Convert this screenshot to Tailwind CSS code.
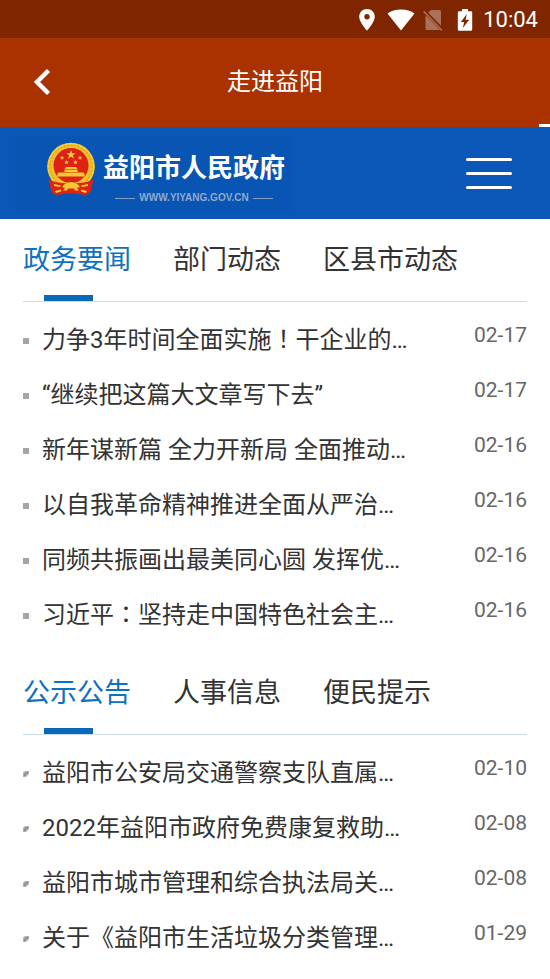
<!DOCTYPE html>
<html lang="zh-CN">
<head>
  <meta charset="UTF-8" />
  <meta name="viewport" content="width=device-width, initial-scale=1" />
  <title>走进益阳</title>
  <script src="https://cdn.jsdelivr.net/npm/@tailwindcss/browser@4"></script>
</head>
<body class="bg-white min-h-screen text-[#333] font-[Roboto,'Noto_Sans_CJK_SC',sans-serif]">

  <!-- status bar -->
  <div class="flex h-[38px] items-center justify-end bg-[#7f2600] pt-[2px] pr-3 text-white">
    <svg class="mr-3 h-[22px] w-4" viewBox="0 0 16 22" fill="currentColor" aria-hidden="true">
      <path fill-rule="evenodd" d="M8 0C3.6 0 .2 3.4.2 7.700c0 5.500 7.800 14 7.800 14s7.800-8.500 7.800-14C15.800 3.400 12.400 0 8 0Zm0 5a2.700 2.700 0 1 1 0 5.400A2.700 2.700 0 0 1 8 5Z" />
    </svg>
    <svg class="mr-2 h-[22px] w-7" viewBox="0 0 28 22" fill="currentColor" aria-hidden="true">
      <path d="M14 21.500.5 4.500C4 1.800 8.500.4 14 .4s10 1.400 13.500 4.100Z" />
    </svg>
    <svg class="mr-[14px] h-[22px] w-5 text-[#aa705a]" viewBox="0 0 20 22" aria-hidden="true">
      <path fill="currentColor" d="M8 1h8.500Q18 1 18 2.500v14.300L5.200 3.800ZM2.500 6 17 21H4q-1.500 0-1.500-1.500Z" />
      <path d="M.6 2.200 19 21.400" stroke="currentColor" stroke-width="1.500" />
    </svg>
    <svg class="mr-[10px] h-[22px] w-4" viewBox="0 0 16 22" fill="currentColor" aria-hidden="true">
      <path fill-rule="evenodd" d="M5 0h6v2.200h3q1.200 0 1.200 1.200v17.200q0 1.200-1.200 1.200H2Q.8 21.800.8 20.600V3.400Q.8 2.200 2 2.200h3ZM9.800 5 3.800 13h3.400l-1.400 6 6.400-8.200H8.600Z" />
    </svg>
    <span class="text-[22px] leading-6">10:04</span>
  </div>

  <!-- title bar -->
  <header class="relative grid h-[89px] grid-cols-[84px_1fr_84px] items-center bg-[#a93200] pb-[2px] text-white">
    <button type="button" aria-label="返回" class="flex h-full items-center justify-center">
      <svg class="h-7 w-5" viewBox="0 0 20 28" fill="none" stroke="currentColor" stroke-width="4.500" aria-hidden="true">
        <path d="M16.500 2.500 5 14l11.500 11.500" />
      </svg>
    </button>
    <h1 class="text-center text-2xl">走进益阳</h1>
    <span class="absolute right-0 bottom-0 h-[3px] w-[11px] bg-white"></span>
  </header>

  <!-- site banner -->
  <div class="flex h-[92px] items-center justify-between bg-[#0a57b8] pr-[38px] pl-[15px] text-white">
    <a href="#" class="flex h-[74px] items-start bg-[#0955b4] pt-[6px] pr-2 pl-[31px]">
      <svg class="mr-[7px] h-[54px] w-[50px]" viewBox="0 0 50 54" aria-hidden="true">
        <circle cx="25" cy="24.500" r="23.800" fill="#f2c02c" />
        <circle cx="25" cy="24.500" r="21" fill="none" stroke="#dca325" stroke-width="1.200" stroke-dasharray="2 1.500" />
        <circle cx="25" cy="24.500" r="22.800" fill="none" stroke="#fadb5a" stroke-width="1" stroke-dasharray="3 2" />
        <circle cx="25" cy="23.500" r="17.500" fill="#de2314" />
        <path fill="#fbd63c" d="m25 8 1.100 3.300h3.500l-2.800 2 1.100 3.400-2.900-2.100-2.900 2.100 1.100-3.400-2.800-2h3.500ZM16 13.500l.6 1.500h1.700l-1.300 1 .5 1.700-1.500-1-1.500 1 .5-1.700-1.300-1h1.700ZM34 13.500l.6 1.500h1.700l-1.300 1 .5 1.700-1.500-1-1.500 1 .5-1.700-1.300-1h1.700ZM20.500 18l.6 1.500h1.700l-1.300 1 .5 1.700-1.500-1-1.500 1 .5-1.700-1.300-1h1.700ZM29.500 18l.6 1.500h1.700l-1.300 1 .5 1.700-1.500-1-1.500 1 .5-1.700-1.300-1h1.700Z" />
        <path fill="#f6c832" d="M20 25h10l1.500 2h-13ZM18.500 27.500h13v2.500h-13ZM12 30.500h26l1 4H11Z" />
        <path fill="#de2314" d="M2.500 37.500q4 2 9.500 3l9 1h8l9-1q5.500-1 9.500-3L44.500 50q-3 4-8.500 2.500l-7-1h-8l-7 1Q8.500 54 5.500 50Z" />
        <path fill="#f6c832" d="M18 42.500q7-5 14 0l2 2.500-3 1 2 2.500h-4l-1-2h-6l-1 2h-4l2-2.500-3-1ZM8 42l7 1.500-1 1.500-6-1ZM42 42l-7 1.500 1 1.500 6-1ZM9 49l6-1.500v2l-5 1.500ZM41 49l-6-1.500v2l5 1.500Z" />
      </svg>
      <span class="flex flex-col items-center pt-[6px]">
        <span class="text-[26px] leading-10 font-bold">益阳市人民政府</span>
        <span class="flex items-center gap-1 font-['Liberation_Sans',sans-serif] text-[10px] leading-5 font-bold text-[#91a9cb]">
          <i class="h-px w-5 bg-[#7f9fc9]"></i>WWW.YIYANG.GOV.CN<i class="h-px w-5 bg-[#7f9fc9]"></i>
        </span>
      </span>
    </a>
    <button type="button" aria-label="菜单" class="flex w-[46px] flex-col gap-[11px]">
      <span class="h-[3px] w-full rounded-full bg-white"></span>
      <span class="h-[3px] w-full rounded-full bg-white"></span>
      <span class="h-[3px] w-full rounded-full bg-white"></span>
    </button>
  </div>

  <main class="px-[23px]">
    <section class="pb-[9px]">
      <div class="flex h-[83px] gap-[42px] border-b border-[#c9dded] text-[27px] leading-[80px]">
        <button type="button" class="relative text-[#0e71be]">政务要闻<span class="absolute bottom-0 left-[21px] h-[6px] w-[49px] bg-[#0b69b9]"></span></button>
        <button type="button">部门动态</button>
        <button type="button">区县市动态</button>
      </div>
      <ul class="pt-[11px] text-2xl leading-[55px]">
        <li class="flex h-[55px] items-center">
          <span class="mr-[13px] size-[6px] shrink-0 bg-[#a5a5a5]"></span>
          <a href="#" class="min-w-0 flex-1 truncate">力争3年时间全面实施<span lang="zh-TW" class="font-['Noto_Sans_CJK_TC',sans-serif] leading-none">！</span>干企业的…</a>
          <time class="self-start text-[21px] leading-[45px] text-[#666]">02-17</time>
        </li>
        <li class="flex h-[55px] items-center">
          <span class="mr-[13px] size-[6px] shrink-0 bg-[#a5a5a5]"></span>
          <a href="#" class="min-w-0 flex-1 truncate">“继续把这篇大文章写下去”</a>
          <time class="self-start text-[21px] leading-[45px] text-[#666]">02-17</time>
        </li>
        <li class="flex h-[55px] items-center">
          <span class="mr-[13px] size-[6px] shrink-0 bg-[#a5a5a5]"></span>
          <a href="#" class="min-w-0 flex-1 truncate">新年谋新篇 全力开新局 全面推动…</a>
          <time class="self-start text-[21px] leading-[45px] text-[#666]">02-16</time>
        </li>
        <li class="flex h-[55px] items-center">
          <span class="mr-[13px] size-[6px] shrink-0 bg-[#a5a5a5]"></span>
          <a href="#" class="min-w-0 flex-1 truncate">以自我革命精神推进全面从严治…</a>
          <time class="self-start text-[21px] leading-[45px] text-[#666]">02-16</time>
        </li>
        <li class="flex h-[55px] items-center">
          <span class="mr-[13px] size-[6px] shrink-0 bg-[#a5a5a5]"></span>
          <a href="#" class="min-w-0 flex-1 truncate">同频共振画出最美同心圆 发挥优…</a>
          <time class="self-start text-[21px] leading-[45px] text-[#666]">02-16</time>
        </li>
        <li class="flex h-[55px] items-center">
          <span class="mr-[13px] size-[6px] shrink-0 bg-[#a5a5a5]"></span>
          <a href="#" class="min-w-0 flex-1 truncate">习近平<span lang="zh-TW" class="font-['Noto_Sans_CJK_TC',sans-serif] leading-none">：</span>坚持走中国特色社会主…</a>
          <time class="self-start text-[21px] leading-[45px] text-[#666]">02-16</time>
        </li>
      </ul>
    </section>

    <section>
      <div class="flex h-[83px] gap-[42px] border-b border-[#c9dded] text-[27px] leading-[80px]">
        <button type="button" class="relative text-[#0e71be]">公示公告<span class="absolute bottom-0 left-[21px] h-[6px] w-[49px] bg-[#0b69b9]"></span></button>
        <button type="button">人事信息</button>
        <button type="button">便民提示</button>
      </div>
      <ul class="pt-[11px] text-2xl leading-[55px]">
        <li class="flex h-[55px] items-center">
          <svg class="mr-[13px] size-[6px] shrink-0" viewBox="0 0 6 6" aria-hidden="true"><path d="M0 6V3Q0 0 3 0h3v3L3 6Z" fill="#b0b0b0" /><path d="M1.500 5Q1.500 1.500 5 1.500" fill="none" stroke="#777" /></svg>
          <a href="#" class="min-w-0 flex-1 truncate">益阳市公安局交通警察支队直属…</a>
          <time class="self-start text-[21px] leading-[45px] text-[#666]">02-10</time>
        </li>
        <li class="flex h-[55px] items-center">
          <svg class="mr-[13px] size-[6px] shrink-0" viewBox="0 0 6 6" aria-hidden="true"><path d="M0 6V3Q0 0 3 0h3v3L3 6Z" fill="#b0b0b0" /><path d="M1.500 5Q1.500 1.500 5 1.500" fill="none" stroke="#777" /></svg>
          <a href="#" class="min-w-0 flex-1 truncate">2022年益阳市政府免费康复救助…</a>
          <time class="self-start text-[21px] leading-[45px] text-[#666]">02-08</time>
        </li>
        <li class="flex h-[55px] items-center">
          <svg class="mr-[13px] size-[6px] shrink-0" viewBox="0 0 6 6" aria-hidden="true"><path d="M0 6V3Q0 0 3 0h3v3L3 6Z" fill="#b0b0b0" /><path d="M1.500 5Q1.500 1.500 5 1.500" fill="none" stroke="#777" /></svg>
          <a href="#" class="min-w-0 flex-1 truncate">益阳市城市管理和综合执法局关…</a>
          <time class="self-start text-[21px] leading-[45px] text-[#666]">02-08</time>
        </li>
        <li class="flex h-[55px] items-center">
          <svg class="mr-[13px] size-[6px] shrink-0" viewBox="0 0 6 6" aria-hidden="true"><path d="M0 6V3Q0 0 3 0h3v3L3 6Z" fill="#b0b0b0" /><path d="M1.500 5Q1.500 1.500 5 1.500" fill="none" stroke="#777" /></svg>
          <a href="#" class="min-w-0 flex-1 truncate">关于《益阳市生活垃圾分类管理…</a>
          <time class="self-start text-[21px] leading-[45px] text-[#666]">01-29</time>
        </li>
      </ul>
    </section>
  </main>

</body>
</html>
